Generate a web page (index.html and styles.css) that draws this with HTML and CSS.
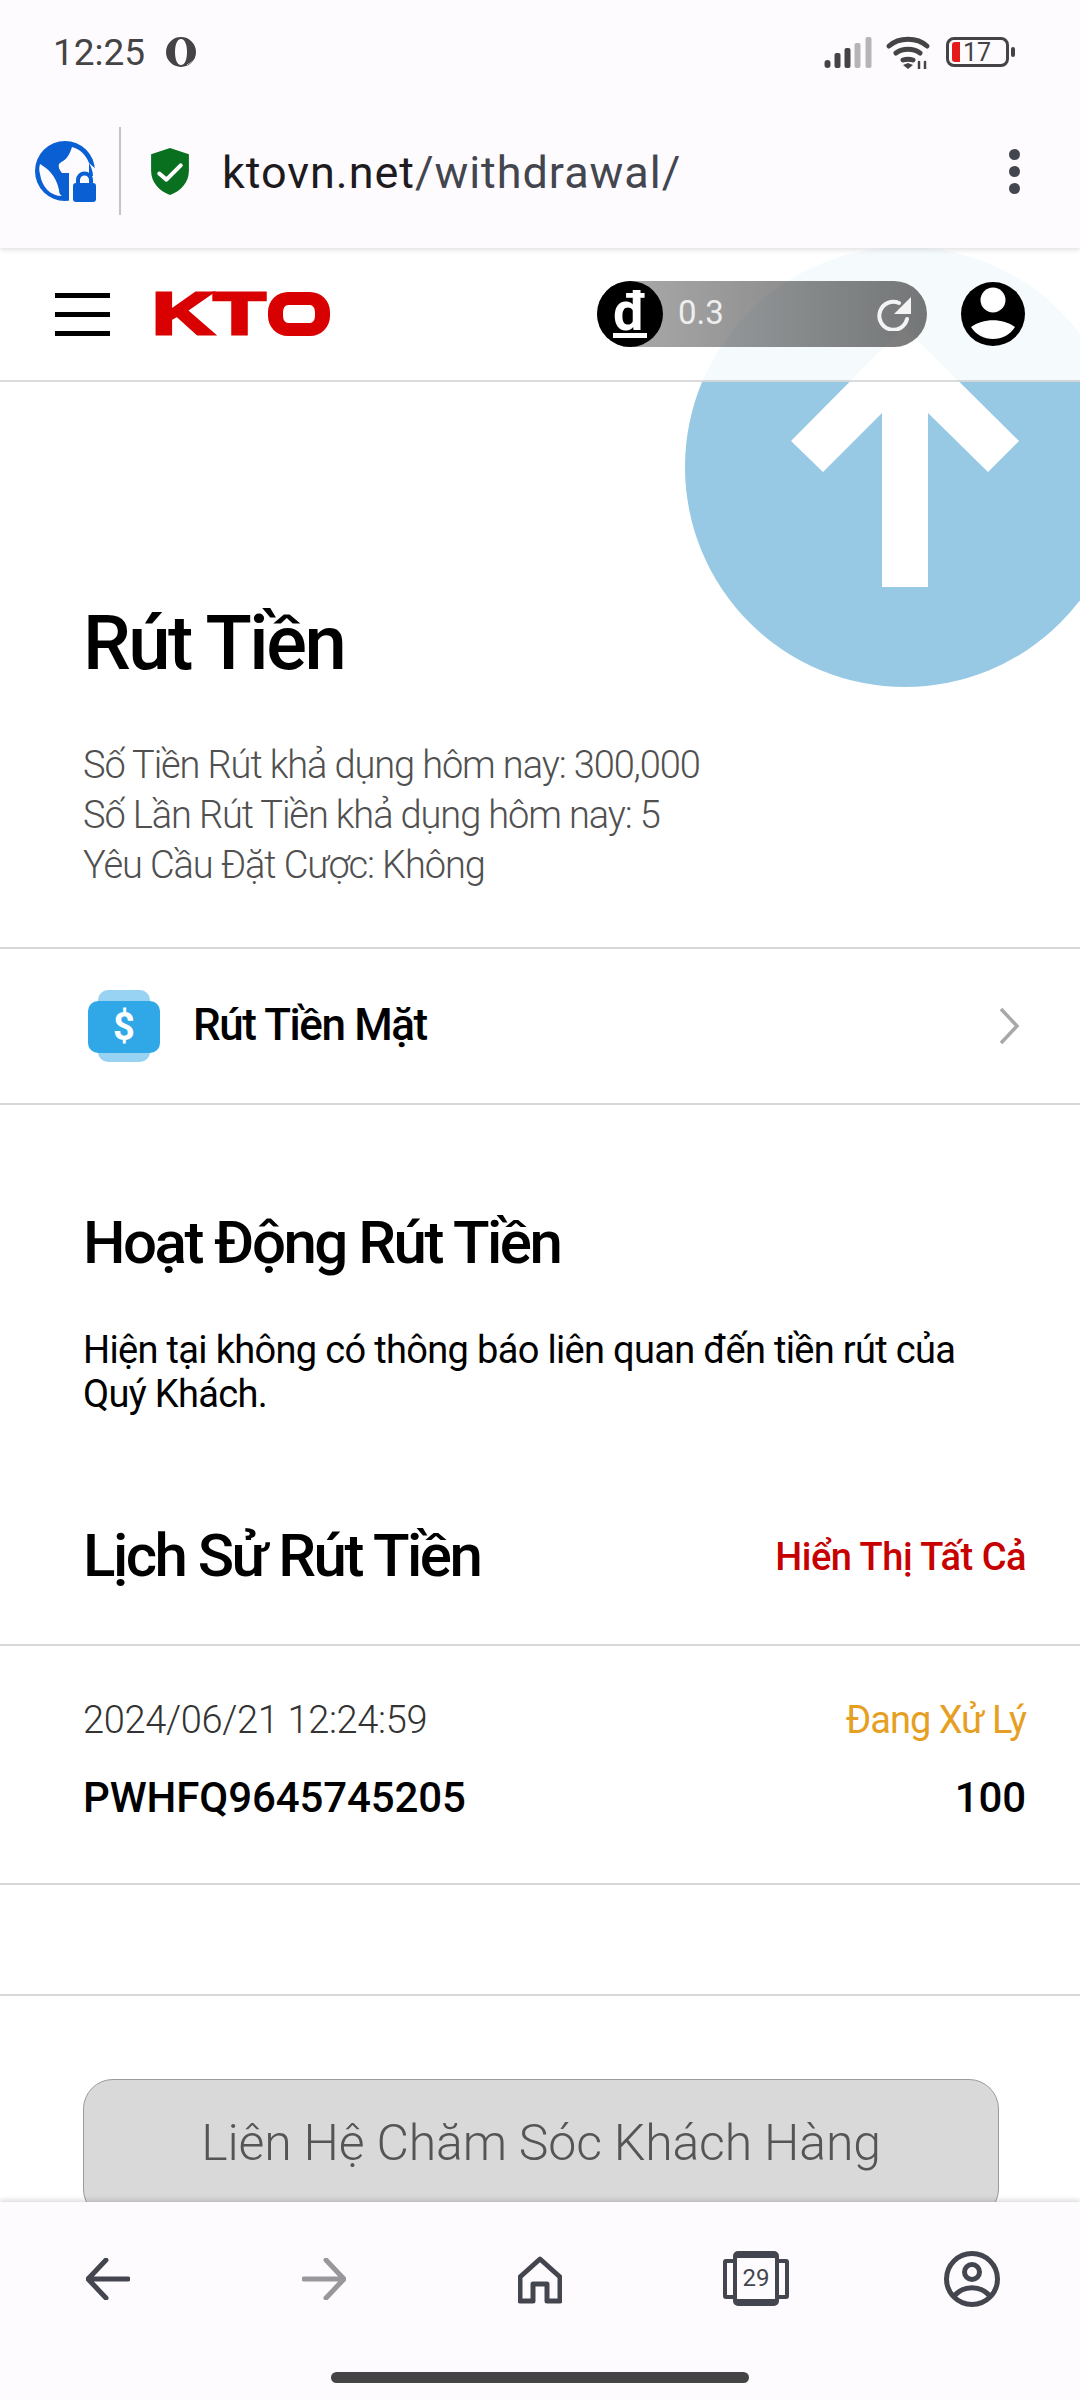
FILE: index.html
```html
<!DOCTYPE html>
<html lang="vi">
<head>
    <meta charset="UTF-8">
    <meta name="viewport" content="width=device-width, initial-scale=1.0">
    <title>Rút Tiền</title>
    <link rel="stylesheet" href="styles.css">
</head>
<body>
    <div class="phone">
        <div class="browser-top">
            <div class="status-bar">
                <div class="status-left">
                    <span class="time">12:25</span>
                    <svg class="opera" viewBox="0 0 30 30"><path fill="#444" fill-rule="evenodd" d="M15 0a15 15 0 1 0 0 30 15 15 0 0 0 0-30zm0 2c-4 0-6 6-6 13s2 13 6 13c4 0 6-6 6-13s-2-13-6-13z"/><path fill="#fefbff" d="M20 28c4-1 7-4 9-8-2 4-5 6-9 8z"/></svg>
                </div>
                <div class="status-right">
                    <svg class="signal" viewBox="0 0 47 31">
                        <rect x="0" y="23" width="6" height="8" rx="3" fill="#444"/>
                        <rect x="10" y="16" width="6" height="15" rx="2" fill="#444"/>
                        <rect x="20" y="11" width="6" height="20" rx="2" fill="#444"/>
                        <rect x="30" y="6" width="6" height="25" rx="2" fill="#b5b5b8"/>
                        <rect x="41" y="0" width="6" height="31" rx="2" fill="#b5b5b8"/>
                    </svg>
                    <svg class="wifi" viewBox="0 0 44 33" fill="none" stroke="#444" stroke-width="5" stroke-linecap="round">
                        <path d="M3 10C13 1 31 1 41 10"/>
                        <path d="M10 17c7-5 17-5 24 0"/>
                        <path d="M17 24c3-1 7-1 10 0"/>
                        <path d="M22 33l-5-4 5-2 5 2z" fill="#444" stroke="none"/>
                        <path d="M33 26v7M39 26v7" stroke-width="2.5"/>
                    </svg>
                    <div class="battery">
                        <span class="battery-level"></span>
                        <span class="battery-num">17</span>
                    </div>
                    <span class="battery-nub"></span>
                </div>
            </div>
            <div class="url-bar">
                <svg class="globe" viewBox="0 0 62 62">
                    <circle cx="30" cy="31" r="30" fill="#0a5fd3"/>
                    <path fill="#fefbff" d="M37 7C45 9 51 15 54 23L62 30V62H34V33H27C25 30 23 28 24 24 27 21 31 20 33 16 35 13 36 10 37 7z"/>
                    <path fill="#fefbff" d="M5 24C12 28 21 35 24 50 24 53 25 55 27 56 16 56 7 48 5 34 4 31 4 27 5 24z"/>
                    <path fill="#0a5fd3" d="M54 23C56 27 58 31 58 36L54 36z"/>
                    <rect x="38" y="43" width="23" height="19" rx="3" fill="#0a5fd3"/>
                    <path d="M43 44v-4a6.500 6.500 0 0 1 13 0v4" fill="none" stroke="#0a5fd3" stroke-width="4"/>
                </svg>
                <span class="url-sep"></span>
                <svg class="shield" viewBox="0 0 37 46">
                    <path fill="#08701f" d="M18.500 0L37 6v16c0 12-8 20-18.500 24C8 42 0 34 0 22V6z"/>
                    <path fill="none" stroke="#fff" stroke-width="4" stroke-linecap="round" stroke-linejoin="round" d="M8 25l7 6 14-14"/>
                </svg>
                <div class="url-text">ktovn.net<span class="url-path">/withdrawal/</span></div>
                <div class="url-menu"><span></span><span></span><span></span></div>
            </div>
        </div>

        <main class="page">
            <header class="site-header">
                <div class="burger"><span></span><span></span><span></span></div>
                <div class="logo"><span class="logo-text">KT</span><span class="logo-o"></span></div>
                <div class="balance">
                    <div class="coin"><span>đ</span></div>
                    <span class="amount">0.3</span>
                    <svg class="reload" viewBox="0 0 34 34" fill="none">
                        <path d="M30 22A14 14 0 1 1 22 6" stroke="#f4f4f4" stroke-width="4" stroke-linecap="round"/>
                        <path d="M34 0v17H17z" fill="#f4f4f4"/>
                    </svg>
                </div>
                <svg class="avatar" viewBox="0 0 64 66">
                    <circle cx="32" cy="33" r="32"/>
                    <circle cx="32" cy="19" r="12.500" fill="#fff"/>
                    <path fill="#fff" d="M10 46c12-9 32-9 44 0-5 8-13 12-22 12s-17-4-22-12z"/>
                </svg>
            </header>

            <div class="scroll-top">
                <svg viewBox="0 0 440 440">
                    <path fill="#fff" d="M219 80L334 194 303 225 243 166V340H197V166L138 225 106 194z"/>
                </svg>
            </div>

            <section class="summary">
                <h1>Rút Tiền</h1>
                <p>Số Tiền Rút khả dụng hôm nay: 300,000</p>
                <p>Số Lần Rút Tiền khả dụng hôm nay: 5</p>
                <p>Yêu Cầu Đặt Cược: Không</p>
            </section>

            <div class="cash-row">
                <div class="cash-icon">
                    <span class="cash-back"></span>
                    <span class="cash-front">$</span>
                </div>
                <span class="cash-label">Rút Tiền Mặt</span>
                <svg class="chevron" viewBox="0 0 22 40" fill="none"><path d="M3 3l16 17L3 37" stroke="#a8a8a8" stroke-width="3.500"/></svg>
            </div>

            <section class="activity">
                <h2>Hoạt Động Rút Tiền</h2>
                <p>Hiện tại không có thông báo liên quan đến tiền rút của Quý Khách.</p>
            </section>

            <div class="history-head">
                <h2>Lịch Sử Rút Tiền</h2>
                <span class="show-all">Hiển Thị Tất Cả</span>
            </div>

            <div class="history-item">
                <div class="item-line">
                    <span class="item-date">2024/06/21 12:24:59</span>
                    <span class="item-status">Đang Xử Lý</span>
                </div>
                <div class="item-line item-main">
                    <span>PWHFQ9645745205</span>
                    <span>100</span>
                </div>
            </div>

            <div class="spacer"></div>

            <button class="support-btn">Liên Hệ Chăm Sóc Khách Hàng</button>
        </main>

        <nav class="browser-nav">
            <div class="nav-icons">
                <div class="nav-cell"><svg class="nav-arrow" viewBox="0 0 44 42" fill="none" stroke="#44464f" stroke-width="5" stroke-linecap="round" stroke-linejoin="round"><path d="M42 21H3M20 2L2 21l18 19"/></svg></div>
                <div class="nav-cell"><svg class="nav-arrow" viewBox="0 0 44 42" fill="none" stroke="#97979c" stroke-width="5" stroke-linecap="round" stroke-linejoin="round"><path d="M2 21h39M24 2l18 19-18 19"/></svg></div>
                <div class="nav-cell"><svg class="nav-home" viewBox="0 0 44 48" fill="none" stroke="#44464f" stroke-width="5" stroke-linejoin="round"><path d="M22 3L42 21V45H29V28H15V45H2V21z"/></svg></div>
                <div class="nav-cell">
                    <div class="nav-tabs">
                        <span class="tabs-side"></span>
                        <span class="tabs-count">29</span>
                        <span class="tabs-side"></span>
                    </div>
                </div>
                <div class="nav-cell"><svg class="nav-profile" viewBox="0 0 56 56" fill="none" stroke="#44464f" stroke-width="5"><circle cx="28" cy="28" r="25.500"/><circle cx="28" cy="21" r="7.500"/><path d="M10 45c10-11 26-11 36 0"/></svg></div>
            </div>
            <div class="home-bar"></div>
        </nav>
    </div>
</body>
</html>
```

FILE: styles.css
```css
* {
    box-sizing: border-box;
}
html, body {
    margin: 0;
    padding: 0;
}
body {
    font-family: Roboto, "Noto Sans", sans-serif;
    color: #000;
    background: #fff;
}
.phone {
    width: 1080px;
    height: 2400px;
    display: flex;
    flex-direction: column;
    overflow: hidden;
}

/* browser chrome */
.browser-top {
    height: 248px;
    background: #fefbff;
    box-shadow: 0 2px 5px rgba(0, 0, 0, 0.12);
    position: relative;
    z-index: 5;
    flex-shrink: 0;
}
.status-bar {
    height: 102px;
    padding: 36px 65px 0 53px;
    display: flex;
    justify-content: space-between;
    align-items: flex-start;
}
.status-left, .status-right {
    display: flex;
    align-items: center;
    height: 32px;
}
.time {
    font-size: 37px;
    color: #444;
}
.opera {
    width: 30px;
    height: 30px;
    margin-left: 21px;
}
.signal {
    width: 48px;
    height: 31px;
}
.wifi {
    width: 46px;
    height: 33px;
    margin-left: 13px;
}
.battery {
    width: 63px;
    height: 30px;
    margin-left: 15px;
    border: 3px solid #444;
    border-radius: 8px;
    display: flex;
    align-items: center;
    padding-left: 3px;
}
.battery-level {
    width: 8px;
    height: 20px;
    background: #e31b1b;
    border-radius: 3px 0 0 3px;
}
.battery-num {
    font-size: 25px;
    color: #444;
    margin-left: 3px;
}
.battery-nub {
    width: 4px;
    height: 10px;
    background: #444;
    margin-left: 2px;
    border-radius: 2px;
}
.url-bar {
    height: 88px;
    margin-top: 25px;
    display: flex;
    align-items: center;
    position: relative;
}
.globe {
    width: 62px;
    height: 62px;
    margin-left: 35px;
}
.url-sep {
    width: 2px;
    height: 88px;
    background: #c4c4c8;
    margin-left: 22px;
}
.shield {
    width: 38px;
    height: 47px;
    margin-left: 30px;
}
.url-text {
    font-size: 45px;
    letter-spacing: 0.950px;
    color: #1d1b20;
    margin-left: 33px;
    padding-top: 2px;
    flex: 1;
}
.url-path {
    color: #44464f;
}
.url-menu {
    width: 11px;
    margin-right: 60px;
    display: flex;
    flex-direction: column;
    gap: 6px;
}
.url-menu span {
    width: 11px;
    height: 11px;
    border-radius: 50%;
    background: #44464f;
}

/* page */
.page {
    flex: 1;
    min-height: 0;
    position: relative;
    overflow: hidden;
    background: #fff;
}
.site-header {
    height: 134px;
    padding: 0 54px 0 55px;
    display: flex;
    align-items: center;
    background: rgba(255, 255, 255, 0.9);
    border-bottom: 2px solid rgba(0, 0, 0, 0.14);
    position: relative;
    z-index: 2;
}
.burger {
    width: 55px;
    display: flex;
    flex-direction: column;
    gap: 14px;
}
.burger span {
    height: 5px;
    background: #000;
}
.logo {
    width: 178px;
    height: 44px;
    margin-left: 42px;
    margin-right: auto;
    display: flex;
    justify-content: space-between;
}
.logo-text {
    display: block;
    font-family: "Liberation Sans", sans-serif;
    font-weight: 700;
    font-size: 60px;
    line-height: 44px;
    color: #d80000;
    -webkit-text-stroke: 3px #d80000;
    transform: scaleX(1.42);
    transform-origin: left center;
}
.logo-o {
    width: 62px;
    height: 44px;
    border: solid #d80000;
    border-width: 13px 15px;
    border-radius: 20px;
}
.balance {
    width: 330px;
    height: 66px;
    border-radius: 33px;
    background: linear-gradient(90deg, rgba(0, 0, 0, 0.32), rgba(0, 0, 0, 0.53));
    display: flex;
    align-items: center;
}
.coin {
    width: 66px;
    height: 66px;
    border-radius: 50%;
    background: #000;
    display: flex;
    justify-content: center;
    align-items: center;
}
.coin span {
    color: #fff;
    font-weight: 700;
    font-size: 54px;
    line-height: 42px;
    border-bottom: 5px solid #fff;
}
.amount {
    color: #eee;
    font-size: 33px;
    margin-left: 15px;
    padding-bottom: 3px;
}
.reload {
    width: 34px;
    height: 34px;
    margin-left: auto;
    margin-right: 16px;
}
.avatar {
    width: 66px;
    height: 66px;
    margin-left: 33px;
}
.scroll-top {
    position: absolute;
    left: 685px;
    top: -1px;
    width: 440px;
    height: 440px;
    border-radius: 50%;
    background: #97c9e5;
    z-index: 1;
}
.scroll-top svg {
    display: block;
    width: 440px;
    height: 440px;
}
.summary {
    padding: 219px 83px 57px;
    border-bottom: 2px solid #d8d8d8;
}
h1 {
    margin: 0 0 55px;
    font-size: 76px;
    font-weight: 500;
    line-height: 84px;
    letter-spacing: -2.500px;
}
.summary p {
    margin: 0;
    font-size: 38px;
    font-weight: 300;
    line-height: 50px;
    color: #505050;
    letter-spacing: -1.100px;
}
.cash-row {
    height: 156px;
    padding: 0 60px 0 88px;
    display: flex;
    align-items: center;
    border-bottom: 2px solid #d8d8d8;
}
.cash-icon {
    width: 72px;
    height: 72px;
    position: relative;
}
.cash-back {
    position: absolute;
    left: 10px;
    top: 0;
    width: 52px;
    height: 72px;
    background: #99d3f3;
    border-radius: 10px;
}
.cash-front {
    position: absolute;
    left: 0;
    top: 11px;
    width: 72px;
    height: 52px;
    background: #30a8e8;
    border-radius: 10px;
    color: #fff;
    font-weight: 700;
    font-size: 38px;
    line-height: 52px;
    text-align: center;
}
.cash-label {
    font-size: 44px;
    font-weight: 500;
    letter-spacing: -1.400px;
    margin-left: 33px;
    padding-bottom: 2px;
}
.chevron {
    width: 22px;
    height: 40px;
    margin-left: auto;
}
.activity {
    padding: 106px 83px 0;
}
h2 {
    margin: 0;
    font-size: 60px;
    font-weight: 500;
    line-height: 64px;
    letter-spacing: -2.500px;
}
.activity p {
    margin: 53px 0 0;
    font-size: 38px;
    line-height: 44px;
    letter-spacing: -0.670px;
}
.history-head {
    margin-top: 108px;
    padding: 0 54px 56px 83px;
    display: flex;
    justify-content: space-between;
    align-items: center;
    border-bottom: 2px solid #d8d8d8;
}
.show-all {
    color: #c70000;
    font-size: 38px;
    font-weight: 500;
    letter-spacing: -0.470px;
    padding-top: 2px;
}
.history-item {
    padding: 52px 54px 61px 83px;
    border-bottom: 2px solid #d8d8d8;
}
.item-line {
    display: flex;
    justify-content: space-between;
    line-height: 44px;
    font-size: 38px;
}
.item-date {
    font-weight: 300;
    color: #333;
    letter-spacing: -0.330px;
}
.item-status {
    color: #e5a023;
    letter-spacing: -1px;
}
.item-main {
    margin-top: 32px;
    line-height: 48px;
    font-size: 42px;
    font-weight: 500;
    letter-spacing: -0.100px;
}
.spacer {
    height: 111px;
    border-bottom: 2px solid #d8d8d8;
}
.support-btn {
    display: block;
    width: 916px;
    height: 140px;
    margin: 83px 0 0 83px;
    background: #d9d9d9;
    border: 1px solid #9a9a9a;
    border-radius: 30px;
    font-family: inherit;
    font-size: 50px;
    font-weight: 300;
    letter-spacing: -0.170px;
    color: #555;
    padding: 0 0 12px;
}

/* bottom bar */
.browser-nav {
    height: 198px;
    flex-shrink: 0;
    background: #fefbff;
    box-shadow: 0 -2px 5px rgba(0, 0, 0, 0.15);
    position: relative;
    z-index: 5;
}
.nav-icons {
    height: 168px;
    padding-top: 49px;
    display: grid;
    grid-template-columns: repeat(5, 216px);
}
.nav-cell {
    display: flex;
    justify-content: center;
    align-items: flex-start;
}
.nav-arrow {
    width: 44px;
    height: 42px;
    margin-top: 7px;
}
.nav-home {
    width: 44px;
    height: 48px;
    margin-top: 5px;
}
.nav-tabs {
    width: 66px;
    height: 55px;
    display: flex;
    align-items: center;
    justify-content: center;
}
.tabs-side {
    width: 14px;
    height: 40px;
    flex-shrink: 0;
    border: 4px solid #44464f;
    border-radius: 3px;
}
.tabs-count {
    width: 46px;
    height: 55px;
    flex-shrink: 0;
    border: 4.500px solid #44464f;
    border-top-width: 7px;
    border-bottom-width: 7px;
    border-radius: 5px;
    background: #fefbff;
    font-size: 24px;
    line-height: 40px;
    text-align: center;
    color: #44464f;
    margin: 0 -4px;
    position: relative;
}
.nav-profile {
    width: 56px;
    height: 56px;
}
.home-bar {
    width: 418px;
    height: 11px;
    margin: 2px auto 0;
    background: #444;
    border-radius: 6px;
}
```
